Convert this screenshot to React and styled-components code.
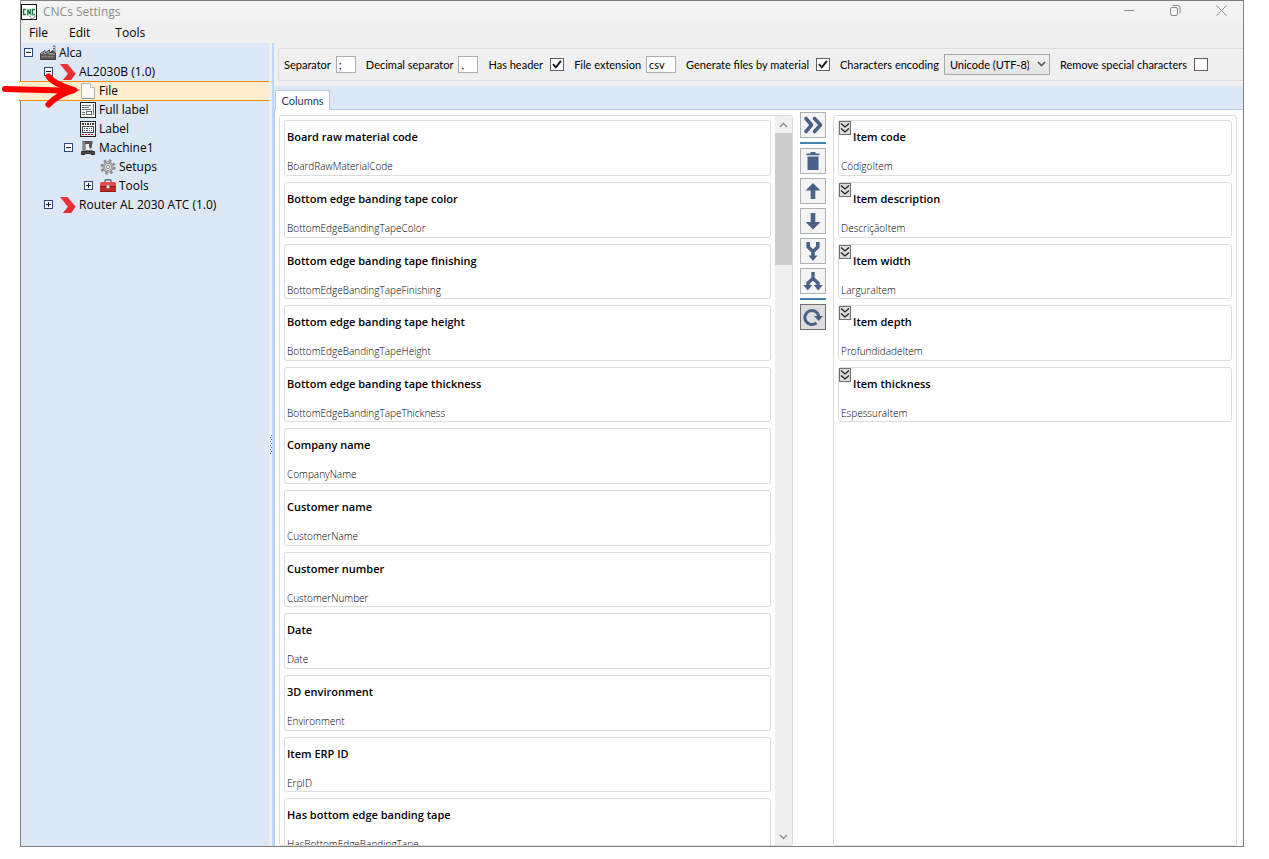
import React from "react";
import styled, { createGlobalStyle } from "styled-components";

const INK = "#4a6288";

const GlobalStyle = createGlobalStyle`
  *, *::before, *::after { box-sizing: border-box; }
  html, body { margin: 0; background: #fff; }
  body {
    font-family: "Open Sans", "Noto Sans", sans-serif;
    font-size: 12px;
    line-height: 16px;
    color: #000;
    overflow: hidden;
  }
  button, input, select { font: inherit; color: inherit; margin: 0; padding: 0; border-radius: 0; }
  svg { display: block; }
  h2, p, h1, ul { margin: 0; padding: 0; font-weight: inherit; }
  ul { list-style: none; }
`;

const Window = styled.div`
  position: relative;
  display: flex;
  flex-direction: column;
  height: calc(100vh - 12px);
  margin: 0 25px 0 20px;
  border: 1px solid #808080;
  background: #f0f0f0;
`;

const TitleBar = styled.header`
  display: flex;
  align-items: center;
  flex: none;
  height: 22px;
  background: #f3f3f3;
`;

const Title = styled.h1`
  flex: 1;
  padding-left: 6px;
  font-size: 12px;
  line-height: 20px;
  color: #8c8c8c;
`;

const WindowButtons = styled.div`
  display: flex;
  align-items: center;
  align-self: flex-start;
  padding-right: 7px;
`;

const WindowButton = styled.button`
  display: flex;
  align-items: center;
  justify-content: center;
  width: 30px;
  height: 19px;
  margin-left: ${(p) => (p.$first ? 0 : 16)}px;
  border: 0;
  background: transparent;
`;

const MenuBar = styled.nav`
  display: flex;
  flex: none;
  height: 20px;
  padding-left: 8px;
  gap: 21px;
`;

const MenuItem = styled.button`
  border: 0;
  background: transparent;
  line-height: 20px;
  &:last-child { margin-left: 4px; }
`;

const Body = styled.div`
  display: flex;
  flex: 1;
  min-height: 0;
`;

const Sidebar = styled.aside`
  flex: none;
  width: 248px;
  background: #dce8f6;
`;

const TreeRow = styled.li`
  display: flex;
  align-items: center;
  height: 19px;
  margin-left: ${(p) => (p.$selected ? -2 : 0)}px;
  padding-left: ${(p) => 3 + p.$level * 20 + (p.$selected ? 2 : 0)}px;
  ${(p) =>
    p.$selected &&
    `background: #ffefcf;
     box-shadow: inset 0 1px #f98b10, 0 1px #f98b10;`}
`;

const Toggle = styled.button`
  flex: none;
  width: 9px;
  height: 9px;
  margin-right: 7px;
  border: 0;
  background: transparent;
  visibility: ${(p) => (p.$hidden ? "hidden" : "visible")};
`;

const TreeIcon = styled.span`
  flex: none;
  width: 16px;
  height: 16px;
  margin-right: 3px;
`;

const Splitter = styled.div`
  display: flex;
  align-items: center;
  flex: none;
  width: 5px;
  border-right: 2px solid #bdd9fb;
  background: #f0f0f0;
`;

const Main = styled.main`
  display: flex;
  flex-direction: column;
  flex: 1;
  min-width: 0;
  background: #fff;
`;

const Toolbar = styled.div`
  flex: none;
  height: 43px;
  padding: 5px 0 0 4px;
  background: #f0f0f0;
`;

const OptionGroup = styled.div`
  display: flex;
  align-items: center;
  gap: 10px;
  height: 33px;
  padding-left: 5px;
  border: 1px solid #dcdcdc;
  border-right: 0;
  border-radius: 3px 0 0 3px;
  font-family: Lato, "Open Sans", sans-serif;
  font-size: 11px;
  white-space: nowrap;
`;

const Option = styled.div`
  display: flex;
  align-items: center;
  gap: ${(p) => (p.$check ? 7 : 5)}px;
`;

const TextBox = styled.input`
  width: ${(p) => p.$width}px;
  height: 17px;
  padding: 0 2px;
  border: 1px solid #abadb3;
  background: #fff;
  outline: 0;
`;

const CheckFrame = styled.span`
  position: relative;
  display: flex;
  svg { position: absolute; inset: 0; pointer-events: none; }
`;

const CheckBox = styled.input`
  appearance: none;
  width: 14px;
  height: 13px;
  border: 1px solid #606060;
  background: #fff;
  &:not(:checked) + svg { display: none; }
`;

const SelectFrame = styled.span`
  position: relative;
  display: flex;
  svg { position: absolute; right: 4px; top: 7px; pointer-events: none; }
`;

const Select = styled.select`
  appearance: none;
  width: 106px;
  height: 21px;
  padding: 0 20px 0 5px;
  border: 1px solid #a8a8a8;
  background: linear-gradient(#f0f0f0, #e4e4e4);
`;

const TabStrip = styled.div`
  display: flex;
  align-items: flex-end;
  flex: none;
  height: 24px;
  padding-left: 1px;
  border-bottom: 1px solid #b8cce4;
  background: #dce8f6;
`;

const Tab = styled.button`
  width: 55px;
  height: 20px;
  margin-bottom: -1px;
  border: 1px solid #b8c8e2;
  border-bottom: 0;
  border-radius: 2px 2px 0 0;
  background: #fff;
  font-family: Lato, "Open Sans", sans-serif;
  font-size: 11px;
  color: #24405e;
`;

const Columns = styled.div`
  display: grid;
  grid-template-columns: minmax(0, 14fr) 26px minmax(0, 11fr);
  column-gap: 7px;
  flex: 1;
  min-height: 0;
  padding: 0 6px 0 4px;
  border-left: 1px solid #b8cce4;
`;

const Panel = styled.section`
  display: flex;
  min-height: 0;
  margin-top: 5px;
  border: 1px solid #dcdcdc;
  border-radius: 3px;
  overflow: hidden;
`;

const CardList = styled.ul`
  flex: 1;
  min-width: 0;
  padding: 4px;
  overflow: hidden;
`;

const Card = styled.li`
  position: relative;
  height: 56px;
  margin-bottom: 6px;
  padding: 8px 2px 0;
  border: 1px solid #dcdcdc;
  border-radius: 3px;
  &:nth-child(3), &:nth-child(3n + 5) { height: 55px; }
`;

const CardTitle = styled.h2`
  padding-left: ${(p) => (p.$indent ? 12 : 0)}px;
  font-size: 11px;
  font-weight: 600;
  line-height: 16px;
`;

const CardField = styled.p`
  margin-top: 13px;
  font-size: 10px;
  font-weight: 300;
  line-height: 16px;
`;

const ExpandButton = styled.button`
  position: absolute;
  left: 0;
  top: 0;
  width: 12px;
  height: 14px;
  border: 1px solid #707070;
  background: #dddddd;
`;

const ScrollBar = styled.div`
  display: flex;
  flex-direction: column;
  flex: none;
  width: 17px;
  background: #f0f0f0;
`;

const ScrollArrow = styled.button`
  display: flex;
  align-items: center;
  justify-content: center;
  flex: none;
  height: 17px;
  border: 0;
  background: transparent;
`;

const ScrollTrack = styled.div`
  flex: 1;
`;

const ScrollThumb = styled.div`
  height: 19%;
  background: #cdcdcd;
`;

const Actions = styled.div`
  display: flex;
  flex-direction: column;
  gap: 4px;
  padding-top: 2px;
`;

const ActionButton = styled.button`
  display: flex;
  align-items: center;
  justify-content: center;
  flex: none;
  height: 26px;
  border: 1px solid ${(p) => (p.$active ? "#707070" : "#adb2b5")};
  background: ${(p) => (p.$active ? "#dddddd" : "#f4f4f4")};
`;

const Divider = styled.hr`
  flex: none;
  width: 100%;
  height: 2px;
  margin: 0;
  border: 0;
  background: #4682b4;
`;

const Pointer = styled.svg`
  position: absolute;
  left: -21px;
  top: 60px;
  pointer-events: none;
`;

const AppIcon = () => (
  <svg width="16" height="17" viewBox="0 0 16 17" aria-hidden="true">
    <rect x="0.5" y="0.5" width="15" height="15" fill="#fff" stroke="#111" />
    <path d="M5 5.5H2.5V10.5H5M6.8 11.5V5.5L9.4 10.5V5M14 5.5H11.5V10.5H14" fill="none" stroke="#15803d" strokeWidth="1.4" />
    <circle cx="11.5" cy="12.5" r="2.2" fill="none" stroke="#999" strokeWidth="1.5" strokeDasharray="1.2 .7" />
  </svg>
);

const ToggleIcon = ({ open }) => (
  <svg width="9" height="9" viewBox="0 0 9 9" shapeRendering="crispEdges" aria-hidden="true">
    <rect x="0.5" y="0.5" width="8" height="8" fill="#fff" stroke="#284a80" />
    <path d="M2 4.5H7" stroke="#112233" />
    {!open && <path d="M4.5 2V7" stroke="#112233" />}
  </svg>
);

const treeIcons = {
  factory: (
    <svg width="16" height="16" viewBox="0 0 16 16">
      <path d="M13 0.5H15.5V8H13z" fill="#777" />
      <path d="M13 2.5H15.5M13 5H15.5" stroke="#ddd" />
      <path d="M0.5 14.5V8.5L5 5.5V8L9.5 5V8L13 5.5V8H15.5V14.5z" fill="#5c5c5c" stroke="#3d3d3d" />
      <path d="M1 9L4.5 6.5V9L9 6.5V9H15" fill="none" stroke="#aaa" />
      <path d="M2 11.5H14" stroke="#8a8a8a" strokeDasharray="2 1" />
    </svg>
  ),
  brand: (
    <svg width="16" height="16" viewBox="0 0 16 16">
      <path d="M0 0H7.5L15.5 9.5L11 16H3L8 10z" fill="#ee3037" />
      <path d="M3 16L8 10L15.5 9.5L11 16z" fill="#e22b34" />
    </svg>
  ),
  file: (
    <svg width="16" height="16" viewBox="0 0 16 16">
      <path d="M1.5 0.5H10.5L14.5 4.5V15.5H1.5z" fill="#f8f8f8" stroke="#b0b0b0" />
      <path d="M10.5 0.5V4.5H14.5" fill="#fff" stroke="#bdbdbd" />
      <path d="M2 15.5H14.5" stroke="#999" />
    </svg>
  ),
  fullLabel: (
    <svg width="16" height="16" viewBox="0 0 16 16" shapeRendering="crispEdges">
      <rect x="0.5" y="0.5" width="15" height="15" fill="#f1f4f8" stroke="#222" />
      <path d="M2 3.5H11M2 5.5H9M2 7.5H11M2 10.5H5M2 12.5H5" stroke="#777" />
      <rect x="6.5" y="9.5" width="5" height="3" fill="#fff" stroke="#666" />
      <path d="M13.5 2V13" stroke="#777" />
    </svg>
  ),
  label: (
    <svg width="16" height="16" viewBox="0 0 16 16" shapeRendering="crispEdges">
      <rect x="0.5" y="0.5" width="15" height="15" fill="#fff" stroke="#222" />
      <path d="M2 3H14" stroke="#333" strokeWidth="2" strokeDasharray="2 1 1 1" />
      <rect x="2.5" y="5.5" width="11" height="6" fill="#fff" stroke="#444" />
      <path d="M4 7.5H12M4 9.5H12" stroke="#555" strokeDasharray="1 1 2 1" />
      <path d="M2 13.5H14" stroke="#e02020" strokeDasharray="2 1" />
    </svg>
  ),
  machine: (
    <svg width="16" height="16" viewBox="0 0 16 16">
      <path d="M2.5 1H12.5V4H5.5V11H2.5z" fill="#555" />
      <path d="M4 2V11" stroke="#bbb" />
      <path d="M6 4H9V10H6z" fill="#eee" />
      <path d="M9 4H12V7L10.5 9L9 7z" fill="#555" />
      <path d="M1.5 11.5H14.5V14.5H11V13.5H5V14.5H1.5z" fill="#4a4a4a" stroke="#333" />
      <path d="M6 10.5H13" stroke="#777" />
    </svg>
  ),
  gear: (
    <svg width="16" height="16" viewBox="0 0 16 16">
      <circle cx="8" cy="8" r="6.4" fill="none" stroke="#8c8c8c" strokeWidth="2.6" strokeDasharray="2.5 2.52" />
      <circle cx="8" cy="8" r="4.3" fill="#dfe3e7" stroke="#8c8c8c" strokeWidth="2.4" />
      <circle cx="8" cy="8" r="4.3" fill="none" stroke="#c2c2c2" strokeWidth="1" />
      <circle cx="8" cy="8" r="1.7" fill="#f2f2f2" stroke="#8c8c8c" />
    </svg>
  ),
  toolbox: (
    <svg width="16" height="16" viewBox="0 0 16 16">
      <path d="M5 4.5V3Q5 1.8 6.2 1.8H9.8Q11 1.8 11 3V4.5" fill="none" stroke="#666" strokeWidth="1.4" />
      <path d="M1.5 4H14.5L16 5V8.5H0V5z" fill="#ea4a48" />
      <path d="M0 8.5H16V14H0z" fill="#c62828" />
      <path d="M0 8.5H16M0 13.5H16" stroke="#8e1b1b" />
      <rect x="6.5" y="7" width="3" height="3.5" fill="#eee" stroke="#777" strokeWidth="0.8" />
    </svg>
  ),
};

const tree = [
  { level: 0, icon: "factory", text: "Alca", open: true },
  { level: 1, icon: "brand", text: "AL2030B (1.0)", open: true },
  { level: 2, icon: "file", text: "File", selected: true },
  { level: 2, icon: "fullLabel", text: "Full label" },
  { level: 2, icon: "label", text: "Label" },
  { level: 2, icon: "machine", text: "Machine1", open: true },
  { level: 3, icon: "gear", text: "Setups" },
  { level: 3, icon: "toolbox", text: "Tools", open: false },
  { level: 1, icon: "brand", text: "Router AL 2030 ATC (1.0)", open: false },
];

const available = [
  ["Board raw material code", "BoardRawMaterialCode"],
  ["Bottom edge banding tape color", "BottomEdgeBandingTapeColor"],
  ["Bottom edge banding tape finishing", "BottomEdgeBandingTapeFinishing"],
  ["Bottom edge banding tape height", "BottomEdgeBandingTapeHeight"],
  ["Bottom edge banding tape thickness", "BottomEdgeBandingTapeThickness"],
  ["Company name", "CompanyName"],
  ["Customer name", "CustomerName"],
  ["Customer number", "CustomerNumber"],
  ["Date", "Date"],
  ["3D environment", "Environment"],
  ["Item ERP ID", "ErpID"],
  ["Has bottom edge banding tape", "HasBottomEdgeBandingTape"],
];

const chosen = [
  ["Item code", "CódigoItem"],
  ["Item description", "DescriçãoItem"],
  ["Item width", "LarguraItem"],
  ["Item depth", "ProfundidadeItem"],
  ["Item thickness", "EspessuraItem"],
];

const Glyph = ({ children }) => (
  <svg width="20" height="20" viewBox="0 0 20 20" fill="none" stroke={INK} aria-hidden="true">
    {children}
  </svg>
);

const actions = [
  {
    label: "Add column",
    glyph: <path d="M3 3.5L8.5 10L3 16.5M11.5 3.5L17.5 10L11.5 16.5" strokeWidth="3.6" strokeLinecap="round" strokeLinejoin="round" />,
  },
  "divider",
  {
    label: "Remove column",
    glyph: (
      <g fill={INK} stroke="none">
        <path d="M3.5 2.5H7.5V1H12.5V2.5H16.5V4.2H3.5z" />
        <path d="M4.5 5.5H15.5V19H4.5z" />
      </g>
    ),
  },
  { label: "Move up", glyph: <path d="M10 2L17.5 9.5H12.3V18H7.7V9.5H2.5z" fill={INK} stroke="none" /> },
  { label: "Move down", glyph: <path d="M10 18.5L17.5 11H12.3V2H7.7V11H2.5z" fill={INK} stroke="none" /> },
  {
    label: "Merge columns",
    glyph: (
      <>
        <path d="M5.2 1V6L10 10.5L14.8 6V1M10 10V16" strokeWidth="3.6" />
        <path d="M5.5 14.5H14.5L10 20z" fill={INK} stroke="none" />
      </>
    ),
  },
  {
    label: "Split column",
    glyph: (
      <>
        <path d="M10 1V8M5 15V12L10 7.5L15 12V15" strokeWidth="3.4" />
        <path d="M0.3 14H9.3L4.8 19.5zM10.7 14H19.7L15.2 19.5z" fill={INK} stroke="none" />
      </>
    ),
  },
  "divider",
  {
    label: "Reset",
    active: true,
    glyph: (
      <>
        <path d="M13.5 15.8A7 7 0 1 1 15.8 9.5" strokeWidth="3" />
        <path d="M11 9H20L15.7 14z" fill={INK} stroke="none" />
      </>
    ),
  },
];

const Check = ({ id, label, checked }) => (
  <Option $check>
    <label htmlFor={id}>{label}</label>
    <CheckFrame>
      <CheckBox id={id} type="checkbox" defaultChecked={checked} />
      <svg width="14" height="13" viewBox="0 0 14 13" fill="none" stroke="#1c1c1c" strokeWidth="2" aria-hidden="true">
        <path d="M3 6.2L5.8 9.3L11 2.8" />
      </svg>
    </CheckFrame>
  </Option>
);

const Field = ({ id, label, value, width }) => (
  <Option>
    <label htmlFor={id}>{label}</label>
    <TextBox id={id} type="text" defaultValue={value} $width={width} />
  </Option>
);

const Chevron = ({ up }) => (
  <svg width="9" height="6" viewBox="0 0 9 6" fill="none" stroke="#8a8a8a" strokeWidth="1.4" aria-hidden="true">
    <path d={up ? "M1 5L4.5 1.5L8 5" : "M1 1L4.5 4.5L8 1"} />
  </svg>
);

export default function App() {
  return (
    <>
      <GlobalStyle />
      <Window>
        <TitleBar>
          <AppIcon />
          <Title>CNCs Settings</Title>
          <WindowButtons>
            <WindowButton $first aria-label="Minimize">
              <svg width="11" height="11" viewBox="0 0 11 11" stroke="#8c8c8c" shapeRendering="crispEdges">
                <path d="M0 5.5H10" />
              </svg>
            </WindowButton>
            <WindowButton aria-label="Restore">
              <svg width="11" height="11" viewBox="0 0 11 11" fill="none" stroke="#8c8c8c">
                <rect x="0.5" y="2.5" width="7" height="8" rx="1.5" />
                <path d="M2.5 0.5H8Q10 0.5 10 2.5V8.5" />
              </svg>
            </WindowButton>
            <WindowButton aria-label="Close">
              <svg width="11" height="11" viewBox="0 0 11 11" stroke="#8c8c8c">
                <path d="M0.5 0.5L10.5 10.5M10.5 0.5L0.5 10.5" />
              </svg>
            </WindowButton>
          </WindowButtons>
        </TitleBar>
        <MenuBar>
          <MenuItem>File</MenuItem>
          <MenuItem>Edit</MenuItem>
          <MenuItem>Tools</MenuItem>
        </MenuBar>
        <Body>
          <Sidebar>
            <ul>
              {tree.map((n) => (
                <TreeRow key={n.text} $level={n.level} $selected={n.selected}>
                  <Toggle $hidden={n.open === undefined} aria-label={n.open ? "Collapse" : "Expand"}>
                    <ToggleIcon open={n.open} />
                  </Toggle>
                  <TreeIcon>{treeIcons[n.icon]}</TreeIcon>
                  <span>{n.text}</span>
                </TreeRow>
              ))}
            </ul>
          </Sidebar>
          <Splitter>
            <svg width="3" height="19" viewBox="0 0 3 19" stroke="#4a7ab8" shapeRendering="crispEdges" aria-hidden="true">
              <path d="M2.5 0V19" strokeDasharray="1 3" />
              <path d="M1.5 2V19" strokeDasharray="1 3" />
            </svg>
          </Splitter>
          <Main>
            <Toolbar>
              <OptionGroup>
                <Field id="separator" label="Separator" value=";" width={20} />
                <Field id="decimal" label="Decimal separator" value="," width={20} />
                <Check id="header" label="Has header" checked />
                <Field id="extension" label="File extension" value="csv" width={30} />
                <Check id="material" label="Generate files by material" checked />
                <Option>
                  <label htmlFor="encoding">Characters encoding</label>
                  <SelectFrame>
                    <Select id="encoding" defaultValue="utf8">
                      <option value="utf8">Unicode (UTF-8)</option>
                    </Select>
                    <svg width="9" height="7" viewBox="0 0 9 7" fill="none" stroke="#555" strokeWidth="1.6" aria-hidden="true">
                      <path d="M1 1L4.5 4.5L8 1" />
                    </svg>
                  </SelectFrame>
                </Option>
                <Check id="special" label="Remove special characters" checked={false} />
              </OptionGroup>
            </Toolbar>
            <TabStrip>
              <Tab>Columns</Tab>
            </TabStrip>
            <Columns>
              <Panel>
                <CardList>
                  {available.map(([title, field]) => (
                    <Card key={field}>
                      <CardTitle>{title}</CardTitle>
                      <CardField>{field}</CardField>
                    </Card>
                  ))}
                </CardList>
                <ScrollBar>
                  <ScrollArrow aria-label="Scroll up">
                    <Chevron up />
                  </ScrollArrow>
                  <ScrollTrack>
                    <ScrollThumb />
                  </ScrollTrack>
                  <ScrollArrow aria-label="Scroll down">
                    <Chevron />
                  </ScrollArrow>
                </ScrollBar>
              </Panel>
              <Actions>
                {actions.map((a, i) =>
                  a === "divider" ? (
                    <Divider key={i} />
                  ) : (
                    <ActionButton key={i} aria-label={a.label} $active={a.active}>
                      <Glyph>{a.glyph}</Glyph>
                    </ActionButton>
                  )
                )}
              </Actions>
              <Panel>
                <CardList>
                  {chosen.map(([title, field]) => (
                    <Card key={field}>
                      <ExpandButton aria-label="Expand">
                        <svg width="10" height="12" viewBox="0 0 10 12" fill="none" stroke="#222" strokeWidth="1.3" aria-hidden="true">
                          <path d="M1 1.5L5 5L9 1.5M1 6.5L5 10L9 6.5" />
                        </svg>
                      </ExpandButton>
                      <CardTitle $indent>{title}</CardTitle>
                      <CardField>{field}</CardField>
                    </Card>
                  ))}
                </CardList>
              </Panel>
            </Columns>
          </Main>
        </Body>
        <Pointer width="82" height="50" viewBox="0 0 82 50" fill="none" stroke="#ff0000" strokeLinecap="round" strokeLinejoin="round" aria-hidden="true">
          <path d="M5 28L62 29.5" strokeWidth="6" />
          <path d="M48.500 15.500Q54 23 74 29Q58 33 48.500 43.500" strokeWidth="6" />
          <path d="M60 23L80 29L60 36z" fill="#ff0000" stroke="none" />
        </Pointer>
      </Window>
    </>
  );
}
